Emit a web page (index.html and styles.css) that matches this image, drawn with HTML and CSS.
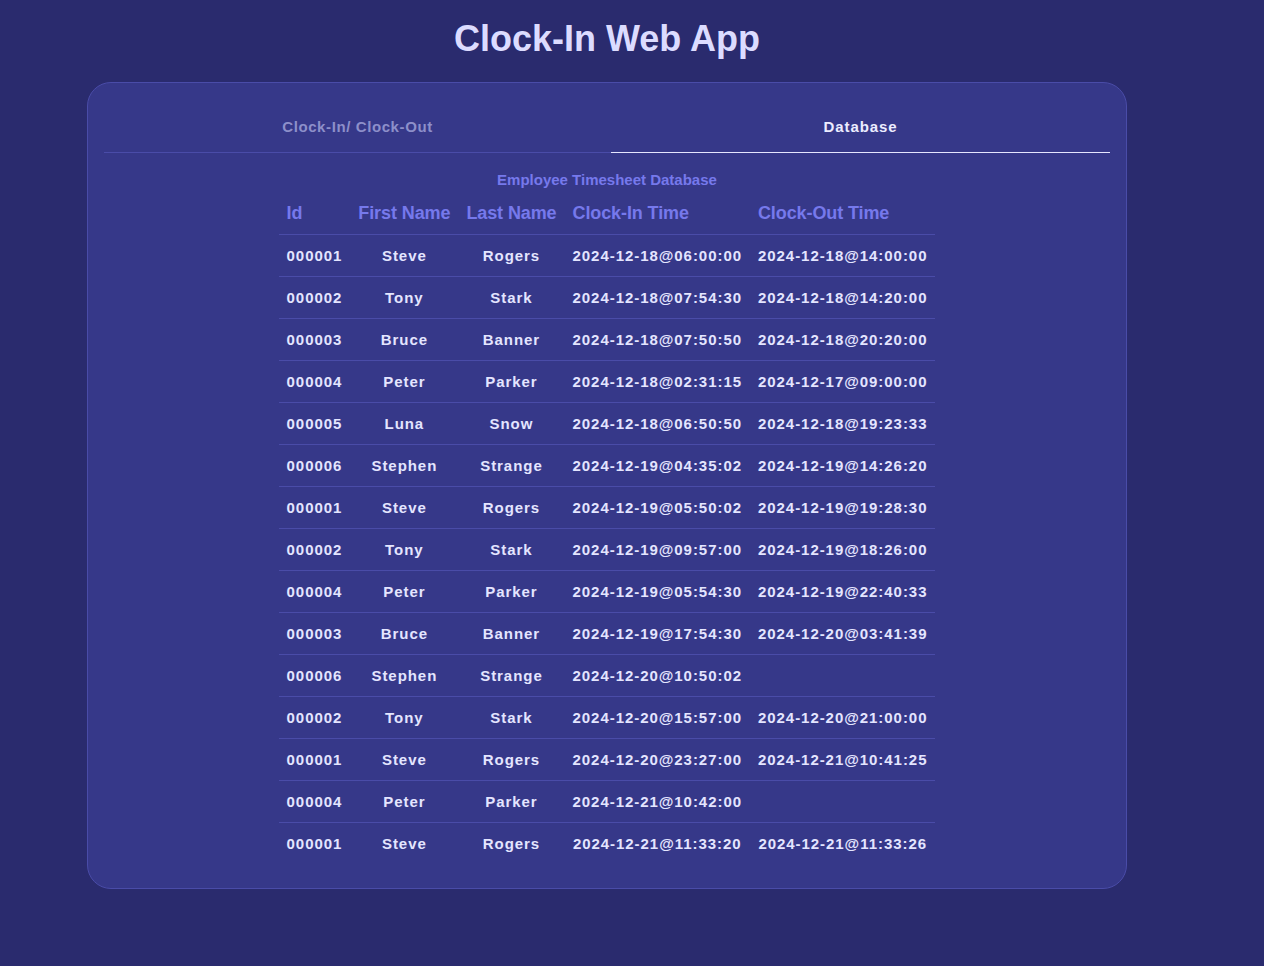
FILE: index.html
```html
<!DOCTYPE html>
<html>
<head>
<meta charset="utf-8">
<title>Clock-In Web App</title>
<link rel="stylesheet" href="styles.css">
</head>
<body>
<div class="page">
  <h1 class="title">Clock-In Web App</h1>
  <div class="card">
    <div class="tabs">
      <div class="tab first">Clock-In/ Clock-Out</div>
      <div class="tab active">Database</div>
    </div>
    <table class="sheet">
      <caption>Employee Timesheet Database</caption>
      <thead>
        <tr><th>Id</th><th>First Name</th><th>Last Name</th><th>Clock-In Time</th><th>Clock-Out Time</th></tr>
      </thead>
      <tbody>
        <tr><td>000001</td><td>Steve</td><td>Rogers</td><td>2024-12-18@06:00:00</td><td>2024-12-18@14:00:00</td></tr>
        <tr><td>000002</td><td>Tony</td><td>Stark</td><td>2024-12-18@07:54:30</td><td>2024-12-18@14:20:00</td></tr>
        <tr><td>000003</td><td>Bruce</td><td>Banner</td><td>2024-12-18@07:50:50</td><td>2024-12-18@20:20:00</td></tr>
        <tr><td>000004</td><td>Peter</td><td>Parker</td><td>2024-12-18@02:31:15</td><td>2024-12-17@09:00:00</td></tr>
        <tr><td>000005</td><td>Luna</td><td>Snow</td><td>2024-12-18@06:50:50</td><td>2024-12-18@19:23:33</td></tr>
        <tr><td>000006</td><td>Stephen</td><td>Strange</td><td>2024-12-19@04:35:02</td><td>2024-12-19@14:26:20</td></tr>
        <tr><td>000001</td><td>Steve</td><td>Rogers</td><td>2024-12-19@05:50:02</td><td>2024-12-19@19:28:30</td></tr>
        <tr><td>000002</td><td>Tony</td><td>Stark</td><td>2024-12-19@09:57:00</td><td>2024-12-19@18:26:00</td></tr>
        <tr><td>000004</td><td>Peter</td><td>Parker</td><td>2024-12-19@05:54:30</td><td>2024-12-19@22:40:33</td></tr>
        <tr><td>000003</td><td>Bruce</td><td>Banner</td><td>2024-12-19@17:54:30</td><td>2024-12-20@03:41:39</td></tr>
        <tr><td>000006</td><td>Stephen</td><td>Strange</td><td>2024-12-20@10:50:02</td><td></td></tr>
        <tr><td>000002</td><td>Tony</td><td>Stark</td><td>2024-12-20@15:57:00</td><td>2024-12-20@21:00:00</td></tr>
        <tr><td>000001</td><td>Steve</td><td>Rogers</td><td>2024-12-20@23:27:00</td><td>2024-12-21@10:41:25</td></tr>
        <tr><td>000004</td><td>Peter</td><td>Parker</td><td>2024-12-21@10:42:00</td><td></td></tr>
        <tr><td>000001</td><td>Steve</td><td>Rogers</td><td>2024-12-21@11:33:20</td><td>2024-12-21@11:33:26</td></tr>
      </tbody>
    </table>
  </div>
</div>
</body>
</html>
```

FILE: styles.css
```css
html, body {
  margin: 0;
  padding: 0;
  background: #2a2b6e;
  font-family: "Liberation Sans", Arial, sans-serif;
  min-height: 100%;
}

.page {
  width: 1040px;
  padding-left: 87px;
}

.title {
  margin: 0;
  height: 82px;
  line-height: 78px;
  text-align: center;
  font-size: 36px;
  font-weight: bold;
  color: #dcdcff;
}

.card {
  background: #363889;
  border: 1px solid #4a4ca8;
  border-radius: 24px;
  padding: 15px 16px 24px;
  box-sizing: border-box;
  width: 1040px;
}

.tabs {
  display: flex;
  border-bottom: 1px solid #4a4ca8;
}

.tab {
  flex: 1;
  text-align: center;
  font-size: 15px;
  font-weight: bold;
  color: #8d8fc9;
  height: 54px;
  line-height: 57px;
  box-sizing: border-box;
  letter-spacing: 0.6px;
}

.tab.first {
  flex: 0 0 507px;
}

.tab.active {
  color: #ececff;
  border-bottom: 1px solid #e6e6ff;
  margin-bottom: -1px;
  height: 55px;
  letter-spacing: 0.9px;
}

.sheet {
  margin: 0 auto;
  border-collapse: collapse;
}

.sheet caption {
  font-size: 15px;
  font-weight: bold;
  color: #7679ec;
  padding-top: 18px;
  line-height: 18px;
}

.sheet th {
  font-size: 18px;
  font-weight: bold;
  color: #7679ec;
  text-align: left;
  padding: 14px 8px 10px;
  line-height: 21px;
  letter-spacing: -0.1px;
  border-bottom: 1px solid #4a4ca8;
}

.sheet td {
  font-size: 15px;
  font-weight: bold;
  color: #e4e5ff;
  text-align: center;
  padding: 12px 8px;
  line-height: 17px;
  letter-spacing: 0.95px;
  border-bottom: 1px solid #4a4ca8;
}

.sheet tbody tr:last-child td {
  border-bottom: none;
}
```
